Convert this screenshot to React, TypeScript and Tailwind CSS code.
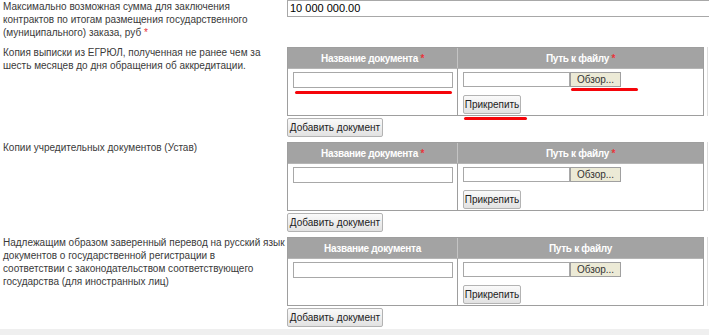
import React from "react";

const font = { fontFamily: '"Liberation Sans", Arial, sans-serif' };

function DocTable({ required }: { required: boolean }) {
  return (
    <div className="flex">
      <div className="grid grid-cols-[170px_245px] border border-[#9e9e9e] w-[417px]">
        <div className="h-[20px] bg-[#a3a3a3] text-white font-bold text-[10px] tracking-[-0.3px] flex items-center justify-center border-r border-[#c4c4c4] whitespace-nowrap">
          <span>
            Название документа{required && <span className="text-[#e8333a]"> *</span>}
          </span>
        </div>
        <div className="h-[20px] bg-[#a3a3a3] text-white font-bold text-[10px] tracking-[-0.3px] flex items-center justify-center whitespace-nowrap">
          <span>
            Путь к файлу{required && <span className="text-[#e8333a]"> *</span>}
          </span>
        </div>
        <div className="h-[47px] border-t border-[#b5b5b5] border-r border-r-[#9e9e9e] pl-[5px] pt-[3px]">
          <div className="w-[160px] h-[16px] border border-[#a8a8a8] bg-white" />
        </div>
        <div className="h-[47px] border-t border-[#b5b5b5] pl-[5px] pt-[3px]">
          <div className="flex">
            <div className="w-[107px] h-[15px] border border-[#a8a8a8] bg-white" />
            <div className="w-[51px] h-[15px] border border-[#a0a0a0] bg-[#ecead6] text-[10px] text-[#333] flex items-center justify-center whitespace-nowrap">
              Обзор...
            </div>
          </div>
          <div className="mt-[8px] w-[58px] h-[19px] border border-[#b3b3b3] rounded-[2px] bg-gradient-to-b from-[#fafafa] to-[#e2e2e2] text-[10px] text-[#222] flex items-center justify-center whitespace-nowrap">
            Прикрепить
          </div>
        </div>
      </div>
      <div className="w-[4px] border-r border-[#dedede]" />
    </div>
  );
}

function AddButton() {
  return (
    <div className="mt-[2px] w-[96px] h-[19px] border border-[#b3b3b3] rounded-[2px] bg-gradient-to-b from-[#fafafa] to-[#e2e2e2] text-[10px] text-[#222] flex items-center justify-center whitespace-nowrap">
      Добавить документ
    </div>
  );
}

function Label({ lines, star }: { lines: string[]; star?: boolean }) {
  return (
    <div className="w-[287px] shrink-0 pl-[3px] text-[10px] leading-[13px] text-[#3a3a3a] flex flex-col">
      {lines.map((l, i) => (
        <div key={i} className="whitespace-nowrap">
          {l}
          {star && i === lines.length - 1 && <span className="text-[#e8333a]"> *</span>}
        </div>
      ))}
    </div>
  );
}

function DocRow({ lines, required }: { lines: string[]; required: boolean }) {
  return (
    <div className="flex h-[95px]">
      <Label lines={lines} />
      <div className="pt-[1px]">
        <DocTable required={required} />
        <AddButton />
      </div>
    </div>
  );
}

export default function App() {
  return (
    <div className="w-[709px] h-[335px] bg-[#efefef] overflow-hidden relative" style={font}>
      <div className="bg-white h-[329px] overflow-hidden">
        <div className="flex h-[46px]">
          <Label
            star
            lines={[
              "Максимально возможная сумма для заключения",
              "контрактов по итогам размещения государственного",
              "(муниципального) заказа, руб",
            ]}
          />
          <div className="w-[440px] h-[17px] border border-[#a8a8a8] text-[11px] text-black pl-[2px] flex items-center shrink-0">
            10 000 000.00
          </div>
        </div>
        <DocRow
          required
          lines={[
            "Копия выписки из ЕГРЮЛ, полученная не ранее чем за",
            "шесть месяцев до дня обращения об аккредитации.",
          ]}
        />
        <DocRow required lines={["Копии учредительных документов (Устав)"]} />
        <DocRow
          required={false}
          lines={[
            "Надлежащим образом заверенный перевод на русский язык",
            "документов о государственной регистрации в",
            "соответствии с законодательством соответствующего",
            "государства (для иностранных лиц)",
          ]}
        />
      </div>

      {/* red annotation marks */}
      <div className="absolute left-[295px] top-[91px] w-[157px] h-[3px] rounded-full bg-[#f5050a]" />
      <div className="absolute left-[571px] top-[88px] w-[67px] h-[3px] rounded-full bg-[#f5050a]" />
      <div className="absolute left-[464px] top-[117px] w-[63px] h-[3px] rounded-full bg-[#f5050a]" />
    </div>
  );
}
